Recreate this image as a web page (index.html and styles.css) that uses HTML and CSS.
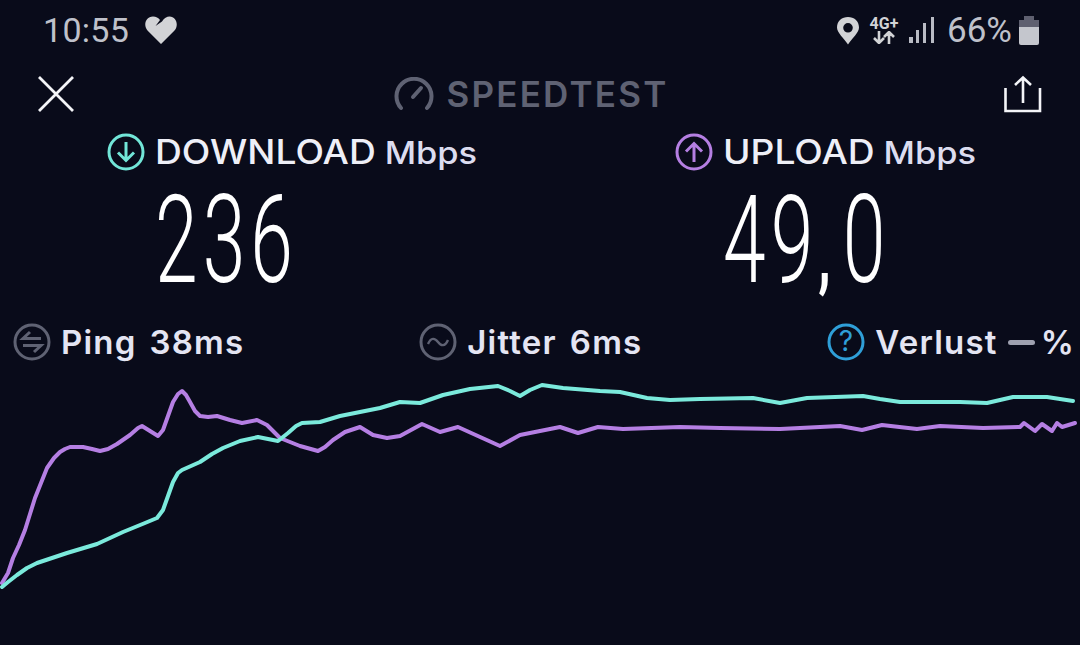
FILE: index.html
```html
<!DOCTYPE html>
<html lang="nl">
<head>
<meta charset="UTF-8">
<meta name="viewport" content="width=device-width, initial-scale=1.0">
<title>Speedtest</title>
<link rel="stylesheet" href="styles.css">
</head>
<body>
<div class="status">
  <div class="status-side">
    <span class="clock">10:55</span>
    <svg class="heart" width="34" height="30" viewBox="0 0 34 30"><path d="M17 29 L3.500 15.500 C-1 10.500 1.500 1.500 9 1.500 C12 1.500 14.500 3 16 5 L11.500 11 L18 6.500 C20 3 23 1.500 25.500 1.500 C32.500 1.500 35 10.500 30.500 15.500 Z" fill="#d2d3d6"/></svg>
  </div>
  <div class="status-side">
    <svg class="pin" width="24" height="29" viewBox="0 0 24 29"><path fill-rule="evenodd" d="M12 28.500 C8 22 1 17 1 11.500 C1 5 6 1 12 1 C18 1 23 5 23 11.500 C23 17 16 22 12 28.500 Z M12 7 A4.800 4.800 0 1 0 12 16.600 A4.800 4.800 0 1 0 12 7 Z" fill="#d2d3d6"/></svg>
    <div class="net">
      <span class="net-label">4G+</span>
      <svg width="22" height="13" viewBox="0 0 22 13"><path d="M6 0 V12 M1 7 L6 12 L11 7 M16 13 V1 M11 6 L16 1 L21 6" fill="none" stroke="#d2d3d6" stroke-width="2.600"/></svg>
    </div>
    <svg class="bars" width="26" height="28" viewBox="0 0 26 28"><g fill="#b9bbc4"><rect x="0" y="21" width="4" height="6"/><rect x="7" y="14" width="3" height="13"/><rect x="14" y="7" width="3" height="20"/><rect x="22" y="1" width="3" height="26"/></g></svg>
    <span class="battery-text">66%</span>
    <div class="battery"><div class="battery-cap"></div><div class="battery-top"></div><div class="battery-fill"></div></div>
  </div>
</div>

<div class="toolbar">
  <svg width="36" height="36" viewBox="0 0 36 36"><path d="M1 1 L35 35 M35 1 L1 35" fill="none" stroke="#f4f5f8" stroke-width="2.800"/></svg>
  <div class="brand">
    <svg width="40" height="34" viewBox="0 0 40 34"><path d="M7 31 A17.500 17.500 0 1 1 33 31" fill="none" stroke="#5f6273" stroke-width="4" stroke-linecap="round"/><path d="M19 20 L27 11" stroke="#5f6273" stroke-width="4" stroke-linecap="round"/></svg>
    <span>SPEEDTEST</span>
  </div>
  <svg width="38" height="38" viewBox="0 0 38 38"><path d="M1.500 13 V36 H36 V13 M19 28 V3 M11 10 L19 2.500 L27 10" fill="none" stroke="#f4f5f8" stroke-width="2.600"/></svg>
</div>

<div class="metrics">
  <div class="metric">
    <div class="metric-head">
      <svg width="38" height="38" viewBox="0 0 38 38"><circle cx="19" cy="19" r="17" fill="none" stroke="#72e6d8" stroke-width="3"/><path d="M19 9 V27 M11 19.500 L19 27.500 L27 19.500" fill="none" stroke="#72e6d8" stroke-width="3"/></svg>
      <div class="metric-title"><span class="metric-name">DOWNLOAD</span><span class="metric-unit">Mbps</span></div>
    </div>
    <div class="metric-value">236</div>
  </div>
  <div class="metric">
    <div class="metric-head">
      <svg width="38" height="38" viewBox="0 0 38 38"><circle cx="19" cy="19" r="17" fill="none" stroke="#b57fe3" stroke-width="3"/><path d="M19 29 V11 M11 18.500 L19 10.500 L27 18.500" fill="none" stroke="#b57fe3" stroke-width="3"/></svg>
      <div class="metric-title"><span class="metric-name">UPLOAD</span><span class="metric-unit">Mbps</span></div>
    </div>
    <div class="metric-value">49<span class="comma">,</span>0</div>
  </div>
</div>

<div class="stats">
  <div class="stat">
    <svg width="38" height="38" viewBox="0 0 38 38"><circle cx="19" cy="19" r="17" fill="none" stroke="#5f6273" stroke-width="3"/><path d="M28 15.500 H10 L17 9 M10 22.500 H28 L21 29" fill="none" stroke="#5f6273" stroke-width="3"/></svg>
    <span>Ping</span><span class="stat-value">38ms</span>
  </div>
  <div class="stat stat-mid">
    <svg width="38" height="38" viewBox="0 0 38 38"><circle cx="19" cy="19" r="17" fill="none" stroke="#5f6273" stroke-width="3"/><path d="M9 21 C12 14 16 15 19 19 C22 23 26 24 29 17" fill="none" stroke="#5f6273" stroke-width="2.400"/></svg>
    <span>Jitter</span><span class="stat-value">6ms</span>
  </div>
  <div class="stat">
    <svg width="38" height="38" viewBox="0 0 38 38"><circle cx="19" cy="19" r="17" fill="none" stroke="#2f9fd8" stroke-width="3"/><text x="19" y="28" text-anchor="middle" class="help">?</text></svg>
    <span>Verlust</span><span class="dash"></span><span>%</span>
  </div>
</div>

<svg class="chart" width="1080" height="279" viewBox="0 366 1080 279">
  <polyline class="line-up" points="2,583 8,573 13,558 19,545 25,530 30,514 35,498 41,483 47,468 54,458 60,452 65,449 70,447 83,447 92,449 100,451 108,449 117,444 130,435 138,428 142,426 150,431 158,436 163,430 168,416 173,402 178,394 182,391 186,395 190,402 195,411 200,416 208,417 217,416 230,420 242,423 257,420 267,425 280,438 290,442 300,446 318,451 325,447 333,440 345,432 360,427 373,435 387,438 400,436 422,424 440,432 458,427 500,446 520,435 560,427 578,433 598,427 623,429 680,427 720,428 780,429 840,426 862,430 882,425 917,429 940,426 983,428 1020,427 1024,423 1035,431 1042,424 1052,431 1057,423 1062,427 1075,423"/>
  <polyline class="line-down" points="2,587 8,582 17,575 27,568 37,563 67,553 97,544 123,532 145,523 157,518 163,510 168,496 173,482 178,473 182,470 200,462 212,454 223,448 240,441 258,437 268,439 278,441 288,433 296,426 302,423 320,422 340,416 360,412 380,408 400,402 420,403 443,395 470,389 498,386 510,391 520,396 530,390 542,385 563,388 600,391 620,392 647,398 670,400 700,399 753,398 780,403 807,398 863,396 880,399 900,402 960,402 987,403 1013,397 1047,397 1073,401"/>
</svg>
</body>
</html>
```

FILE: styles.css
```css
body { margin: 0; width: 1080px; height: 645px; overflow: hidden; background-color: #090b1a; font-family: Inter, "Noto Sans", sans-serif; color: #e8e9f4; }
svg { display: block; flex: none; }

.status { height: 60px; display: flex; justify-content: space-between; align-items: center; padding: 0 41px 0 43px; font-family: Roboto, sans-serif; color: #bfc1ca; }
.status-side { display: flex; align-items: center; }
.clock { font-size: 34px; letter-spacing: 0.3px; }
.heart { margin-left: 15px; }
.net { margin-left: 9px; width: 30px; display: flex; flex-direction: column; align-items: center; }
.net-label { font-size: 16px; font-weight: 700; line-height: 15px; color: #d2d3d6; }
.bars { margin-left: 10px; }
.battery-text { font-size: 35px; margin-left: 12px; }
.battery { width: 20px; height: 29px; margin-left: 7px; }
.battery-cap { width: 10px; height: 4px; margin: 0 auto; background-color: #5f6070; }
.battery-top { height: 7px; background-color: #5f6070; }
.battery-fill { height: 18px; background-color: #c4c6cd; border-radius: 0 0 2px 2px; }

.toolbar { height: 68px; display: flex; justify-content: space-between; align-items: center; padding: 0 38px; }
.brand { display: flex; align-items: center; gap: 13px; font-size: 35px; font-weight: 600; letter-spacing: 2.2px; color: #5f6273; margin-left: -16px; }

.metrics { display: grid; grid-template-columns: 568px 1fr; padding-left: 107px; }
.metric-head { display: flex; align-items: center; height: 48px; }
.metric-title { margin-left: 10px; display: flex; align-items: baseline; white-space: nowrap; font-weight: 500; transform: scaleX(1.11); transform-origin: left center; }
.metric-name { font-size: 33.500px; color: #eeeff7; }
.metric-unit { font-size: 31px; margin-left: 8px; color: #dcddf0; }
.metric-value { margin-left: 48px; height: 142px; font-family: Roboto, sans-serif; font-weight: 300; font-size: 122px; line-height: 130px; letter-spacing: 8px; color: #fff; transform: scaleX(0.63); transform-origin: left center; white-space: nowrap; }
.comma { font-size: 80px; font-weight: 700; letter-spacing: 19px; }

.stats { display: flex; justify-content: space-between; padding: 0 5px 0 13px; }
.stat { display: flex; align-items: center; height: 48px; gap: 10px; font-size: 33px; font-weight: 600; letter-spacing: 1.2px; color: #e4e5f3; }
.stat-mid { margin-left: -10px; }
.stat-value { margin-left: 3px; }
.help { font-size: 28px; font-family: Inter, sans-serif; font-weight: 400; letter-spacing: 0; fill: #2f9fd8; }
.dash { width: 27px; height: 5px; border-radius: 3px; background-color: #9fa1b0; margin-right: -4px; }

.chart polyline { fill: none; stroke-width: 4; stroke-linejoin: round; stroke-linecap: round; }
.line-up { stroke: #b57fe3; }
.line-down { stroke: #7beadc; }
```
